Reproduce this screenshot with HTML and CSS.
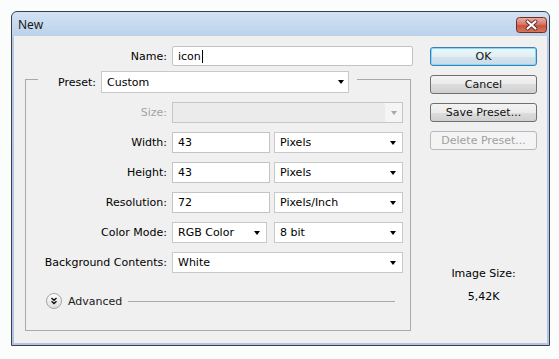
FILE: index.html
```html
<!DOCTYPE html>
<html>
<head>
<meta charset="utf-8">
<title>New</title>
<link rel="stylesheet" href="styles.css">
</head>
<body>
<div class="window">
  <div class="titlebar">
    <span class="title">New</span>
    <span class="close">
      <svg width="31" height="16" viewBox="0 0 31 16">
        <defs>
          <linearGradient id="cg" x1="0" y1="0" x2="0" y2="1">
            <stop offset="0" stop-color="#eab0a4"/>
            <stop offset="0.45" stop-color="#d7786a"/>
            <stop offset="0.55" stop-color="#c8533f"/>
            <stop offset="1" stop-color="#d77a5e"/>
          </linearGradient>
        </defs>
        <rect x="0.5" y="0.5" width="30" height="15" rx="3" fill="url(#cg)" stroke="#6e2f27"/>
        <path d="M11.5 4.5 L19.5 11.5 M19.5 4.5 L11.5 11.5" stroke="#5a2a24" stroke-width="4" stroke-linecap="round"/>
        <path d="M11.5 4.5 L19.5 11.5 M19.5 4.5 L11.5 11.5" stroke="#ffffff" stroke-width="2.2" stroke-linecap="round"/>
      </svg>
    </span>
  </div>
  <div class="content">
    <div class="main">
      <div class="name-row">
        <span class="name-lbl">Name:</span>
        <div class="textbox name-box">icon<span class="caret"></span></div>
      </div>
      <fieldset class="preset">
        <legend>
          <div class="legend-inner">
            <span class="preset-lbl">Preset:</span>
            <div class="select preset-sel"><span>Custom</span><span class="arrow"></span></div>
          </div>
        </legend>
        <div class="row">
          <span class="flbl disabled">Size:</span>
          <div class="select size-sel"><span class="size-btn"><span class="arrow grey"></span></span></div>
        </div>
        <div class="row">
          <span class="flbl">Width:</span>
          <div class="textbox num">43</div>
          <div class="select unit"><span>Pixels</span><span class="arrow"></span></div>
        </div>
        <div class="row">
          <span class="flbl">Height:</span>
          <div class="textbox num">43</div>
          <div class="select unit"><span>Pixels</span><span class="arrow"></span></div>
        </div>
        <div class="row">
          <span class="flbl">Resolution:</span>
          <div class="textbox num">72</div>
          <div class="select unit"><span>Pixels/Inch</span><span class="arrow"></span></div>
        </div>
        <div class="row">
          <span class="flbl">Color Mode:</span>
          <div class="select mode"><span>RGB Color</span><span class="arrow"></span></div>
          <div class="select unit"><span>8 bit</span><span class="arrow"></span></div>
        </div>
        <div class="row">
          <span class="flbl">Background Contents:</span>
          <div class="select full"><span>White</span><span class="arrow"></span></div>
        </div>
        <div class="advanced">
          <span class="adv-icon">
            <svg width="16" height="16" viewBox="0 0 16 16">
              <defs>
                <linearGradient id="ag" x1="0" y1="0" x2="0" y2="1">
                  <stop offset="0" stop-color="#ffffff"/>
                  <stop offset="1" stop-color="#dcdcdc"/>
                </linearGradient>
              </defs>
              <circle cx="8" cy="8" r="7.5" fill="url(#ag)" stroke="#a4a4a4"/>
              <path d="M5.5 5 L8 7.3 L10.5 5 M5.5 8.2 L8 10.5 L10.5 8.2" fill="none" stroke="#111" stroke-width="1.4"/>
            </svg>
          </span>
          <span class="adv-text">Advanced</span>
          <span class="adv-line"></span>
        </div>
      </fieldset>
    </div>
    <div class="side">
      <div class="btn default">OK</div>
      <div class="btn">Cancel</div>
      <div class="btn">Save Preset...</div>
      <div class="btn off">Delete Preset...</div>
      <div class="imgsize">Image Size:</div>
      <div class="imgval">5,42K</div>
    </div>
  </div>
</div>
</body>
</html>
```

FILE: styles.css
```css
* { box-sizing: border-box; }

body {
  margin: 0;
  background: #fbfdfd;
  font-family: "DejaVu Sans", sans-serif;
  font-size: 11px;
  color: #000;
}

.window {
  margin: 11px 0 0 11px;
  width: 539px;
  height: 335px;
  border: 1px solid #38414c;
  border-radius: 6px 6px 0 0;
  background: linear-gradient(#d2e2f3 0px, #bcd2ea 24px, #b6c7e4 26px, #b4c3e2 100%);
  display: flex;
  flex-direction: column;
}

.titlebar {
  height: 24px;
  flex: none;
  display: flex;
  align-items: center;
  padding: 0 2px 0 6px;
}

.title {
  font-family: "Noto Sans", "Open Sans", sans-serif;
  font-size: 12px;
  color: #1a1a1a;
}

.close {
  margin-left: auto;
  align-self: flex-start;
  margin-top: 5px;
  width: 31px;
  height: 16px;
  display: flex;
}

.content {
  flex: 1;
  margin: 0 2px 2px 2px;
  background: #f0f0f0;
  display: flex;
  padding-left: 11px;
}

.main {
  width: 388px;
  flex: none;
  padding-top: 10px;
}

.name-row {
  display: flex;
  height: 20px;
  align-items: center;
}

.name-lbl {
  width: 142px;
  margin-right: 5px;
  text-align: right;
}

.textbox {
  background: #fff;
  border: 1px solid #c3c3c3;
  border-radius: 2px;
  height: 21px;
  padding-left: 5px;
  display: flex;
  align-items: center;
  flex: none;
}

.name-box {
  width: 241px;
  height: 20px;
}

.caret {
  display: inline-block;
  width: 1px;
  height: 13px;
  background: #000;
  margin-left: 1px;
}

.preset {
  margin: 0;
  width: 386px;
  min-width: 0;
  border: 1px solid #a9a9a9;
  padding: 9px 6px 21px 12px;
}

.preset legend {
  padding: 5px 8px 0 19px;
}

.legend-inner {
  display: flex;
  align-items: center;
}

.preset-lbl {
  width: 39px;
  margin-right: 5px;
  text-align: right;
}

.select {
  background: #fff;
  border: 1px solid #c9c9c9;
  height: 21px;
  display: flex;
  align-items: center;
  justify-content: space-between;
  padding: 0 5px 0 5px;
  flex: none;
}

.preset-sel {
  width: 248px;
  height: 22px;
  padding-right: 4px;
}

.arrow {
  width: 0;
  height: 0;
  border-left: 3.5px solid transparent;
  border-right: 3.5px solid transparent;
  border-top: 4px solid #000;
}

.arrow.grey {
  border-top-color: #a6a6a6;
}

.row {
  display: flex;
  align-items: center;
  height: 21px;
}

.row + .row {
  margin-top: 9px;
}

.flbl {
  width: 129px;
  margin-right: 5px;
  text-align: right;
  flex: none;
}

.disabled {
  color: #a3a3a3;
}

.size-sel {
  width: 231px;
  background: #ebebeb;
  border-color: #c6c6c6;
  padding: 0;
  justify-content: flex-end;
}

.size-btn {
  width: 17px;
  height: 19px;
  background: #f5f5f5;
  display: flex;
  align-items: center;
  justify-content: center;
}

.num {
  width: 98px;
  margin-right: 4px;
  border-radius: 0;
}

.unit {
  width: 129px;
  padding-right: 6px;
}

.mode {
  width: 95px;
  margin-right: 7px;
  padding-right: 6px;
}

.full {
  width: 231px;
  padding-right: 6px;
}

.advanced {
  display: flex;
  align-items: center;
  height: 16px;
  margin-top: 20px;
  margin-left: 8px;
}

.adv-icon {
  width: 16px;
  height: 16px;
  display: flex;
  flex: none;
}

.adv-text {
  margin-left: 6px;
  color: #1a1a1a;
}

.adv-line {
  flex: 1;
  height: 1px;
  background: #a9a9a9;
  margin: 0 9px 0 6px;
}

.side {
  width: 107px;
  flex: none;
  margin-left: 17px;
  padding-top: 11px;
  display: flex;
  flex-direction: column;
}

.btn {
  height: 19px;
  border: 1px solid #707070;
  border-radius: 3px;
  background: linear-gradient(#f3f3f3 0%, #ebebeb 50%, #dddddd 50%, #d0d0d0 100%);
  display: flex;
  align-items: center;
  justify-content: center;
  color: #111;
}

.btn + .btn {
  margin-top: 9px;
}

.btn.default {
  border-color: #3c7fb1;
  box-shadow: inset 0 0 0 1px #7fdcf8;
  background: linear-gradient(#eef6fa 0%, #e3eef4 50%, #d3e4ee 50%, #c8dbe7 100%);
}

.btn.off {
  border-color: #b6b9bc;
  background: #f4f4f4;
  color: #a0a0a0;
}

.imgsize {
  margin-top: 117px;
  line-height: 14px;
  text-align: center;
}

.imgval {
  margin-top: 9px;
  line-height: 14px;
  text-align: center;
}
```
